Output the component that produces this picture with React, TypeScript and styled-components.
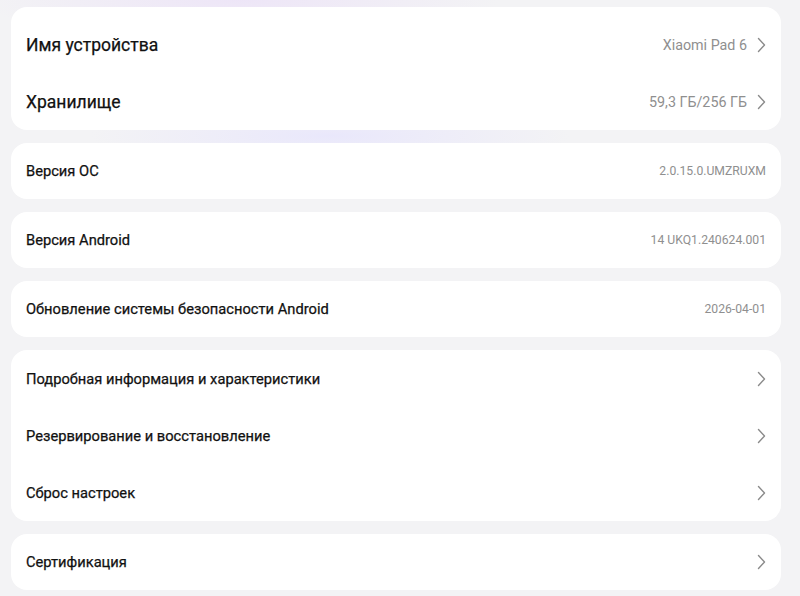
import styled, { createGlobalStyle } from "styled-components";

const GlobalStyle = createGlobalStyle`
  html, body {
    margin: 0;
    padding: 0;
    background: #f3f3f5;
  }
  body {
    font-family: Roboto, "Noto Sans", "Liberation Sans", sans-serif;
    -webkit-font-smoothing: antialiased;
  }
`;

// Page wrapper
const Page = styled.div`
  width: 800px;
  height: 596px;
  box-sizing: border-box;
  padding: 7px 19px 0 11px;
  display: flex;
  flex-direction: column;
  gap: 13px;
  overflow: hidden;
  background:
    radial-gradient(ellipse 260px 40px at 240px 0px, rgba(236, 226, 248, 0.8), transparent),
    radial-gradient(ellipse 240px 30px at 330px 136px, rgba(232, 230, 252, 0.9), transparent),
    #f3f3f5;
`;

const Card = styled.div<{ $padTop?: number }>`
  background: #ffffff;
  border-radius: 16px;
  padding-top: ${(p) => p.$padTop ?? 0}px;
  display: flex;
  flex-direction: column;
`;

const Row = styled.div<{ $h: number }>`
  height: ${(p) => p.$h}px;
  display: flex;
  align-items: center;
  justify-content: space-between;
  padding: 0 15px;
`;

const Title = styled.span<{ $big?: boolean }>`
  font-size: ${(p) => (p.$big ? 17.5 : 14.7)}px;
  font-weight: 400;
  color: #111111;
  -webkit-text-stroke: 0.25px #111111;
`;

const Right = styled.div`
  display: flex;
  align-items: center;
  gap: 10px;
`;

const Value = styled.span<{ $small?: boolean }>`
  font-size: ${(p) => (p.$small ? 12.2 : 14.3)}px;
  color: #8f8f8f;
`;

const Chevron = () => (
  <svg width="9" height="16" viewBox="0 0 9 16" fill="none">
    <path
      d="M1.5 1.5 L7.5 8 L1.5 14.5"
      stroke="#8a8a8a"
      strokeWidth="1.4"
      strokeLinecap="round"
      strokeLinejoin="round"
    />
  </svg>
);

type Item = {
  title: string;
  value?: string;
  arrow?: boolean;
};

type Group = {
  items: Item[];
  big?: boolean;
};

const groups: Group[] = [
  {
    big: true,
    items: [
      { title: "Имя устройства", value: "Xiaomi Pad 6", arrow: true },
      { title: "Хранилище", value: "59,3 ГБ/256 ГБ", arrow: true },
    ],
  },
  { items: [{ title: "Версия ОС", value: "2.0.15.0.UMZRUXM" }] },
  { items: [{ title: "Версия Android", value: "14 UKQ1.240624.001" }] },
  {
    items: [
      { title: "Обновление системы безопасности Android", value: "2026-04-01" },
    ],
  },
  {
    items: [
      { title: "Подробная информация и характеристики", arrow: true },
      { title: "Резервирование и восстановление", arrow: true },
      { title: "Сброс настроек", arrow: true },
    ],
  },
  { items: [{ title: "Сертификация", arrow: true }] },
];

const App = () => {
  return (
    <>
      <GlobalStyle />
      <Page>
        {groups.map((g, gi) => (
          <Card key={gi} $padTop={g.big ? 9 : 0}>
            {g.items.map((it) => (
              <Row key={it.title} $h={g.items.length > 1 ? 57 : 56}>
                <Title $big={g.big}>{it.title}</Title>
                <Right>
                  {it.value && (
                    <Value $small={!it.arrow}>{it.value}</Value>
                  )}
                  {it.arrow && <Chevron />}
                </Right>
              </Row>
            ))}
          </Card>
        ))}
      </Page>
    </>
  );
};

export default App;
